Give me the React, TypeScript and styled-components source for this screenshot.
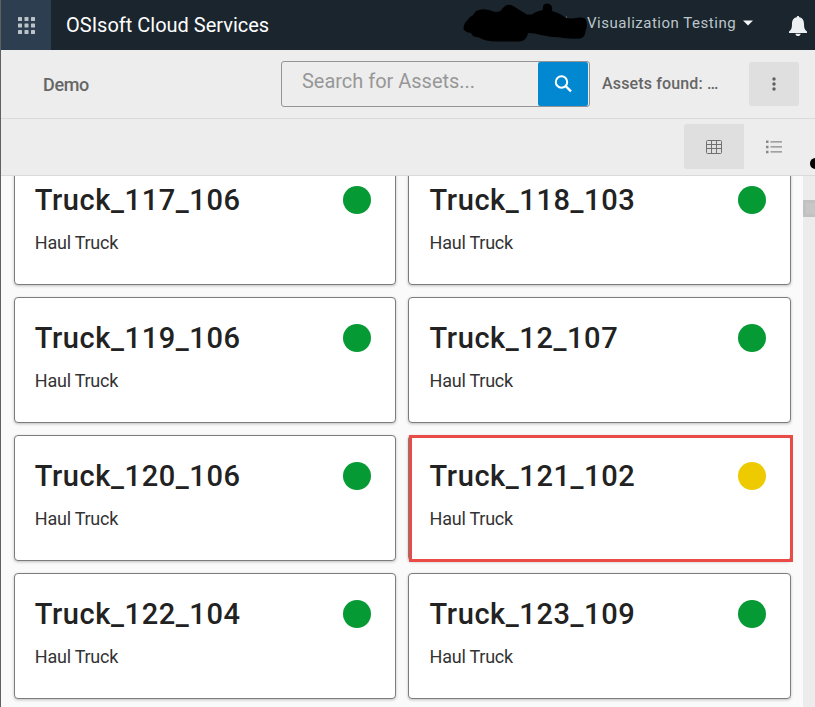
import React from "react";
import styled, { createGlobalStyle } from "styled-components";

const GlobalStyle = createGlobalStyle`
  *, *::before, *::after { box-sizing: border-box; }
  html, body { margin: 0; padding: 0; overflow: hidden; }
  body { font-family: Roboto, "Liberation Sans", sans-serif; background: #fafafa; }
  button { font: inherit; border: 0; padding: 0; }
`;

const Page = styled.div`
  position: relative;
  display: flex;
  flex-direction: column;
  width: 815px;
  height: 707px;
  overflow: hidden;
  border-left: 1px solid #606060;
  background: #fafafa;
`;

const Header = styled.header`
  display: flex;
  align-items: center;
  flex: none;
  height: 50px;
  background: #1b252d;
  color: #fff;
`;

const AppsButton = styled.button`
  display: flex;
  align-items: center;
  justify-content: center;
  width: 50px;
  height: 50px;
  background: #2c3e50;
`;

const Brand = styled.div`
  flex: 1;
  margin-left: 15px;
  font-size: 20px;
  line-height: 50px;
  white-space: nowrap;
`;

const Redaction = styled.svg`
  display: block;
  flex: none;
  margin-right: -1px;
`;

const Account = styled.div`
  display: flex;
  align-items: center;
  gap: 7px;
  width: 202px;
  font-size: 15px;
  letter-spacing: 0.52px;
  line-height: 20px;
  padding-bottom: 4px;
  color: #bcc6cb;
  white-space: nowrap;
`;

const Bell = styled.svg`
  display: block;
  flex: none;
  margin: 1px 8px 0 0;
`;

const Toolbar = styled.div`
  display: flex;
  align-items: center;
  flex: none;
  height: 69px;
  padding-left: 42px;
  background: #ededed;
  border-bottom: 1px solid #dadada;
  color: #666;
`;

const Crumb = styled.div`
  width: 238px;
  font-size: 18px;
  font-weight: 500;
  letter-spacing: -0.35px;
  padding-top: 1px;
`;

const SearchBox = styled.div`
  display: flex;
  width: 309px;
  height: 46px;
  border: 1px solid #959595;
  border-radius: 3px;
`;

const SearchText = styled.div`
  flex: 1;
  padding-left: 20px;
  font-size: 20px;
  letter-spacing: -0.02px;
  line-height: 39px;
  color: #979797;
`;

const SearchButton = styled.button`
  display: flex;
  align-items: center;
  justify-content: center;
  width: 50px;
  height: 44px;
  margin-right: 1px;
  border-radius: 2px;
  background: #0288d1;
`;

const Found = styled.div`
  width: 147px;
  margin-left: 12px;
  padding-bottom: 1px;
  font-size: 16px;
  font-weight: 500;
  letter-spacing: 0.15px;
  white-space: nowrap;
`;

const MenuButton = styled.button`
  display: flex;
  align-items: center;
  justify-content: center;
  width: 50px;
  height: 44px;
  border-radius: 3px;
  background: #dfdfdf;
`;

const ViewBar = styled.div`
  display: flex;
  flex: none;
  justify-content: flex-end;
  height: 57px;
  padding: 5px 11px 0 0;
  background: #ededed;
  border-bottom: 1px solid #dadada;
`;

const ViewButton = styled.button<{ $active?: boolean }>`
  display: flex;
  align-items: center;
  justify-content: center;
  width: 60px;
  height: 45px;
  border-radius: 3px 0 0 3px;
  background: ${(p) => (p.$active ? "#dfdfdf" : "transparent")};
`;

const Content = styled.main`
  display: flex;
  flex: 1;
  min-height: 0;
  overflow: hidden;
`;

const Grid = styled.div`
  display: grid;
  grid-template-columns: 382px 383px;
  grid-auto-rows: 126px;
  gap: 12px;
  width: 802px;
  margin-top: -17px;
  padding-left: 13px;
`;

const Card = styled.article`
  position: relative;
  display: flex;
  justify-content: space-between;
  padding: 22px 23.8px 0 20.6px;
  border: 1px solid #7d7d7d;
  border-radius: 4px;
  background: #fff;
  box-shadow: 0 1px 3px rgba(0, 0, 0, 0.24);
  color: #222;

  &:nth-child(odd) {
    padding-left: 19.8px;
  }
`;

const Title = styled.h2`
  margin: 0;
  font-size: 29px;
  font-weight: 500;
  line-height: 36px;
  letter-spacing: 0.58px;
`;

const Kind = styled.div`
  margin-top: 13px;
  font-size: 18px;
  line-height: 24px;
  letter-spacing: -0.24px;
  color: #333;
`;

const Status = styled.span<{ $warn?: boolean }>`
  width: 28.4px;
  height: 28.4px;
  margin-top: 4px;
  border-radius: 50%;
  background: ${(p) => (p.$warn ? "#eecb00" : "#059a33")};
`;

const Highlight = styled.span`
  position: absolute;
  inset: -1px -3px -2px 0;
  border: 3px solid #e94b46;
`;

const Scrollbar = styled.div`
  width: 12px;
  padding-top: 24px;
  background: #ececec;
`;

const Thumb = styled.div`
  height: 17px;
  border: 3px solid #c1c1c1;
  border-right: 0;
  background: #c7c7c7;
`;

const Cursor = styled.span`
  position: absolute;
  left: 809px;
  top: 158px;
  width: 11px;
  height: 11px;
  border-radius: 50%;
  background: #000;
`;

const trucks = [
  { name: "Truck_117_106" },
  { name: "Truck_118_103" },
  { name: "Truck_119_106" },
  { name: "Truck_12_107" },
  { name: "Truck_120_106" },
  { name: "Truck_121_102", warn: true },
  { name: "Truck_122_104" },
  { name: "Truck_123_109" },
];

const steps = [0, 6.5, 13];

export default function App() {
  return (
    <>
      <GlobalStyle />
      <Page>
        <Header>
          <AppsButton aria-label="Applications">
            <svg width="17" height="17" viewBox="0 0 17 17" fill="#bcc3c9">
              {steps.map((y) =>
                steps.map((x) => <rect key={`${x}-${y}`} x={x} y={y} width="4" height="4" rx="0.6" />)
              )}
            </svg>
          </AppsButton>
          <Brand>OSIsoft Cloud Services</Brand>
          <Redaction width="125" height="50" viewBox="463 0 125 50">
            <path
              d="M465 23 Q462 29 465 31 Q468 33 471 33 Q472 37 479 37.500 Q485 41.500 497 41.500 H520 Q527 40 528 33 Q535 33 541 35 Q550 37 561 37.500 Q566 39 580 38.500 Q585 38 585.500 31 Q588 26 586 20 Q585 17 579 17.500 Q571 19 566 18 Q560 13 552 11 Q553 4 547 3.500 Q542 4 543 10 Q536 11 532 14.500 H527 L513 6 Q507 2.500 502 9 Q501 12 495 12 Q484 7 476 11 Q474 15 470 17 Z"
              fill="#000"
            />
            <circle cx="566.500" cy="17" r="0.6" fill="#8b9499" />
          </Redaction>
          <Account>
            Visualization Testing
            <svg width="10" height="6" viewBox="0 0 10 6" fill="#f4f6f7">
              <path d="M0 .4h10L5 5.400z" />
            </svg>
          </Account>
          <Bell width="18" height="20" viewBox="0 0 18 20" fill="#edf0f2">
            <path d="M9 0c.8 0 1.200.5 1.200 1.300C13.700 2 15 4.500 15 8c0 4 .7 6 3 7.600V17H0v-1.400C2.300 14 3 12 3 8c0-3.500 1.300-6 4.800-6.700C7.800.5 8.200 0 9 0zM6.300 17.700h5.400C11.400 19.200 10.300 20 9 20s-2.400-.8-2.700-2.300z" />
          </Bell>
        </Header>
        <Toolbar>
          <Crumb>Demo</Crumb>
          <SearchBox>
            <SearchText>Search for Assets...</SearchText>
            <SearchButton aria-label="Search">
              <svg width="18" height="18" viewBox="0 0 18 18" fill="none" stroke="#fff" strokeWidth="2">
                <circle cx="7.500" cy="7" r="5.700" />
                <path d="M11.500 11l5.500 5.400" strokeWidth="2.400" />
              </svg>
            </SearchButton>
          </SearchBox>
          <Found>Assets found: …</Found>
          <MenuButton aria-label="More">
            <svg width="4" height="14" viewBox="0 0 4 14" fill="#5f5f5f">
              <circle cx="2" cy="2" r="1.700" />
              <circle cx="2" cy="7" r="1.700" />
              <circle cx="2" cy="12" r="1.700" />
            </svg>
          </MenuButton>
        </Toolbar>
        <ViewBar>
          <ViewButton $active aria-label="Grid view">
            <svg width="16" height="14" viewBox="0 0 16 14" fill="none" stroke="#707070">
              <rect x="0.5" y="0.5" width="15" height="13" rx="1" />
              <path d="M0 4.500h16M0 8.500h16M5.500 0v14M10.500 0v14" />
            </svg>
          </ViewButton>
          <ViewButton aria-label="List view">
            <svg width="16" height="14" viewBox="0 0 16 14" fill="#888">
              <path d="M0 .5h2.500V3H0zM0 5.700h2.500v2.500H0zM0 10.700h2.500v2.500H0z" />
              <path d="M4.500 1.200H16v1.200H4.500zM4.500 6.300H16v1.200H4.500zM4.500 11.300H16v1.200H4.500z" />
            </svg>
          </ViewButton>
        </ViewBar>
        <Content>
          <Grid>
            {trucks.map((t) => (
              <Card key={t.name}>
                <div>
                  <Title>{t.name}</Title>
                  <Kind>Haul Truck</Kind>
                </div>
                <Status $warn={t.warn} />
                {t.warn && <Highlight />}
              </Card>
            ))}
          </Grid>
          <Scrollbar>
            <Thumb />
          </Scrollbar>
        </Content>
        <Cursor />
      </Page>
    </>
  );
}
